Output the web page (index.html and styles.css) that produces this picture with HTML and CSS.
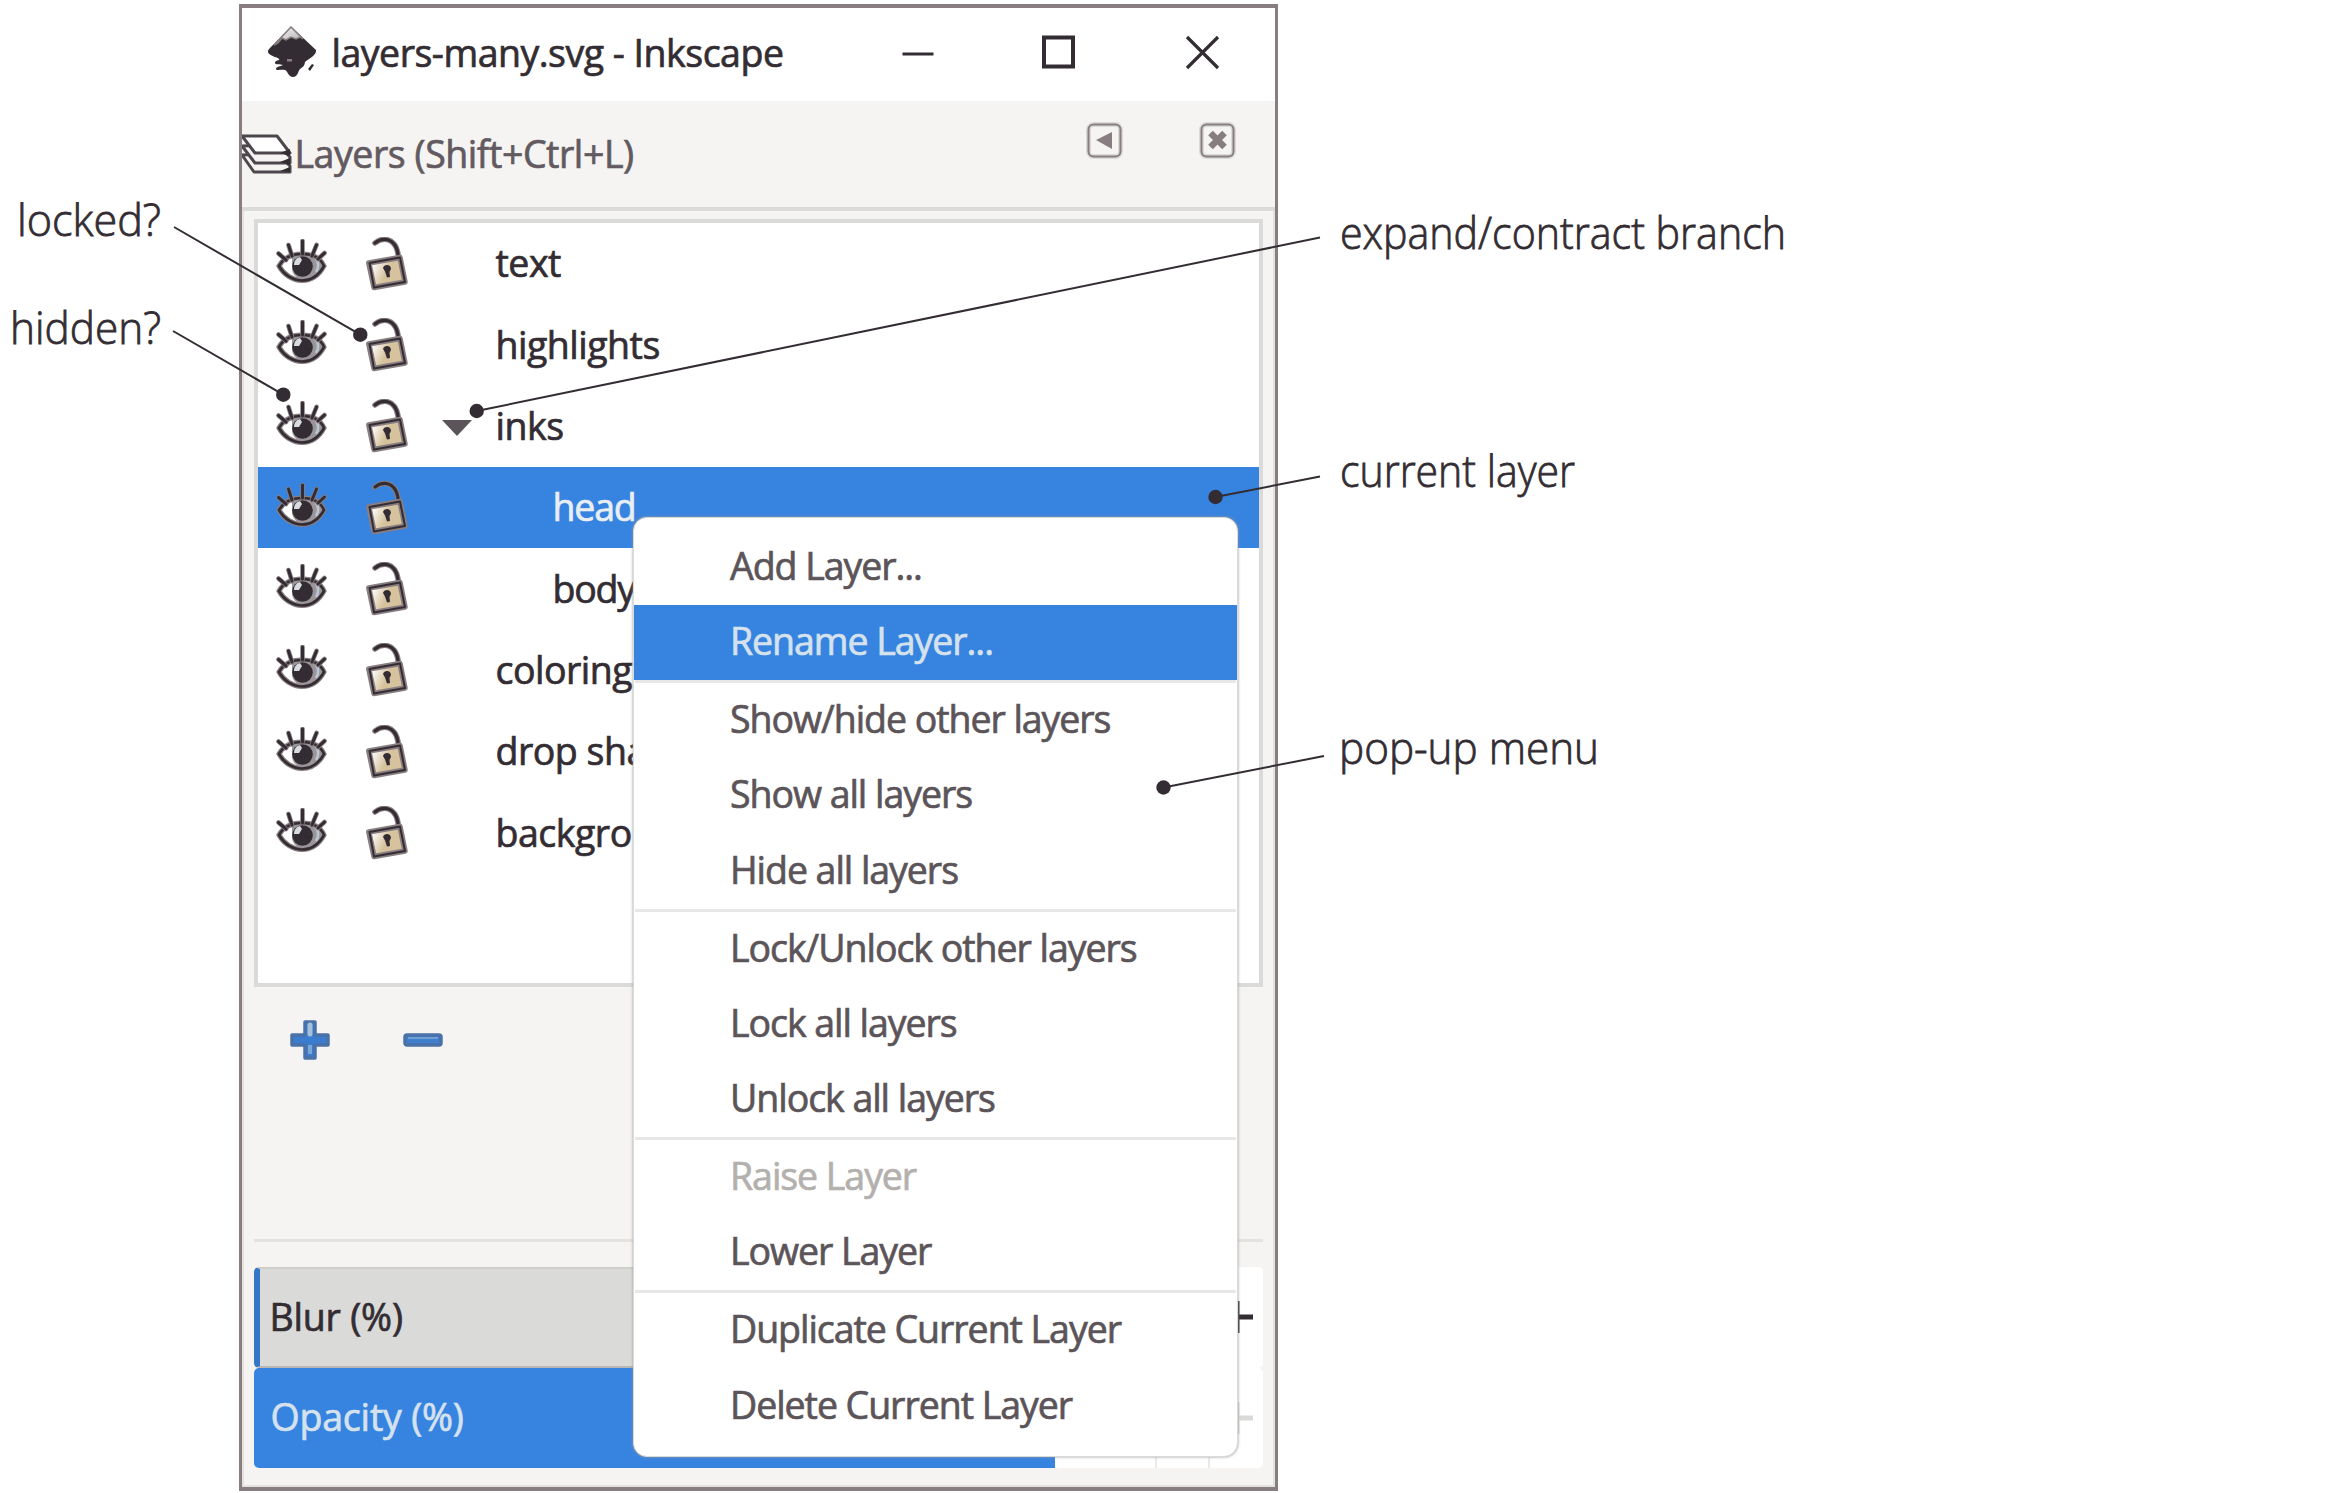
FILE: index.html
```html
<!DOCTYPE html>
<html lang="en">
<head>
<meta charset="utf-8">
<title>layers-many.svg - Inkscape</title>
<link rel="stylesheet" href="styles.css">
</head>
<body>
<svg class="defs" aria-hidden="true">
  <defs>
    <linearGradient id="brass" x1="0" x2="1" y2=".4"><stop offset=".15" stop-color="#fff"/><stop offset=".6" stop-color="#d6c29c"/></linearGradient>
    <linearGradient id="snow" x1="0" x2="1" y2="1"><stop offset="0" stop-color="#fff"/><stop offset="1" stop-color="#a9a6a8"/></linearGradient>
  </defs>
  <symbol id="eye" viewBox="0 0 51 45">
    <path d="M3 27C8 18 17 15 26 15s18 3 22 12c-5 9-13 14.500-22 14.500S8 36 3 27z" fill="#fff" stroke="#887d80" stroke-width="5"/>
    <path d="M16 17c9-2 24-2 31 10-4 8-11 12-19 13-6 0-11-3-12-10z" fill="#9b9499"/>
    <path d="M40 20c3 4 3 8 0 13" fill="none" stroke="#b9c6d4" stroke-width="2.500"/>
    <circle cx="26.500" cy="27.500" r="10.300" fill="#332d33"/>
    <path d="M18 26c0-4 2-7 6-8l2 3-3 5z" fill="#d8dce0"/>
    <path d="M3 27C8 18 17 15 26 15s18 3 22 12c-5 9-13 14.500-22 14.500S8 36 3 27z" fill="none" stroke="#332d33" stroke-width="2.600"/>
    <path d="M10 21L2.500 14.500M16 17L12.500 6M26.500 15V2M36 17L40.500 6M42 20L48.500 14" fill="none" stroke="#887d80" stroke-width="4.600" stroke-linecap="round"/>
    <path d="M10 21L2.500 14.500M16 17L12.500 6M26.500 15V2M36 17L40.500 6M42 20L48.500 14" fill="none" stroke="#332d33" stroke-width="3" stroke-linecap="round"/>
  </symbol>
  <symbol id="lock" viewBox="0 0 42 54">
    <path d="M9 6C15 1 23 1 28 7c4 4 4 10 5 17" fill="none" stroke="#887d80" stroke-width="5.500" stroke-linecap="round"/>
    <path d="M9 6C15 1 23 1 28 7c4 4 4 10 5 17" fill="none" stroke="#332d33" stroke-width="3.200" stroke-linecap="round"/>
    <path d="M2.800 26L34 20.500 39 45 8 50.500z" fill="url(#brass)" stroke="#887d80" stroke-width="5.500" stroke-linejoin="round"/>
    <path d="M3.500 26L34 20.500 39 45 8 50.500z" fill="none" stroke="#332d33" stroke-width="2" stroke-linejoin="round"/>
    <path d="M17 31c1-4 8-4 8 1l-1.500 3 .5 5-3 .5-2-6z" fill="#332d33"/>
  </symbol>
</svg>

<main class="window">
  <header class="titlebar">
    <svg class="logo" viewBox="0 0 50 53">
      <path d="M24 1.500L2 24c-3 4 1 6 6 8 3 1 5 2 4 3-3 1-4 1-4 3s5 1 8 2c-5 2-7 2-7 4s6 0 9 1 3 7 8 7 5-6 7-8c3-2 5-4 5-7 4-3 12-7 11-12z" fill="#332d33"/>
      <path d="M24 2L7 20l4-2 4-5 4 2 5-3 5 2 4-2 3 2z" fill="url(#snow)" stroke="#887d80" stroke-width="1.500"/>
      <path d="M41 44l4-5 2 1-4 6z" fill="#332d33"/>
      <path d="M20 34h5v2.500h-5z" fill="#887d80"/>
    </svg>
    <h1 class="title">layers-many.svg - Inkscape</h1>
    <svg class="controls" viewBox="0 0 320 36">
      <path d="M1.500 19h31" stroke="#332d33" stroke-width="3"/>
      <rect x="143" y="2.500" width="29" height="29" fill="none" stroke="#332d33" stroke-width="4"/>
      <path d="M286 2l31 31M317 2l-31 31" stroke="#332d33" stroke-width="3.200"/>
    </svg>
  </header>

  <section class="dock-head">
    <svg class="stack" viewBox="0 0 50 40">
      <g stroke="#4d464c" stroke-width="3" fill="#f5f4f2" stroke-linejoin="round">
        <path d="M0 21l12 17h36v-6L36 20z"/><path d="M0 12l13 17h35v-6L36 11z"/><path d="M0 2h35l13 17H13z" fill="#fff"/>
      </g>
      <path d="M38 19l10-4v7zM38 28l10-4v7zM38 37l10-4v5z" fill="#332d33"/>
    </svg>
    <h2 class="dock-title">Layers (Shift+Ctrl+L)</h2>
    <svg class="dock-buttons" viewBox="0 0 150 38">
      <g fill="none" stroke="#dadad8" stroke-width="5"><rect x="2.500" y="2.500" width="32" height="32" rx="5"/><rect x="115.500" y="2.500" width="32" height="32" rx="5"/></g>
      <g fill="none" stroke="#887d80" stroke-width="2"><rect x="2.500" y="2.500" width="32" height="32" rx="5"/><rect x="115.500" y="2.500" width="32" height="32" rx="5"/></g>
      <path d="M10 18l16-8v17z" fill="#887d80"/>
      <path d="M124.500 11l14 14M138.500 11l-14 14" stroke="#887d80" stroke-width="6.500"/>
    </svg>
  </section>

  <section class="panel">
    <ul class="layers">
      <li class="row"><svg class="eye"><use href="#eye"/></svg><svg class="lock"><use href="#lock"/></svg><span class="name">text</span></li>
      <li class="row"><svg class="eye"><use href="#eye"/></svg><svg class="lock"><use href="#lock"/></svg><span class="name">highlights</span></li>
      <li class="row"><svg class="eye"><use href="#eye"/></svg><svg class="lock"><use href="#lock"/></svg><span class="branch"></span><span class="name">inks</span></li>
      <li class="row current"><svg class="eye"><use href="#eye"/></svg><svg class="lock"><use href="#lock"/></svg><span class="name child">head</span></li>
      <li class="row"><svg class="eye"><use href="#eye"/></svg><svg class="lock"><use href="#lock"/></svg><span class="name child">body</span></li>
      <li class="row"><svg class="eye"><use href="#eye"/></svg><svg class="lock"><use href="#lock"/></svg><span class="name">coloring</span></li>
      <li class="row"><svg class="eye"><use href="#eye"/></svg><svg class="lock"><use href="#lock"/></svg><span class="name">drop shadow</span></li>
      <li class="row"><svg class="eye"><use href="#eye"/></svg><svg class="lock"><use href="#lock"/></svg><span class="name">background</span></li>
    </ul>

    <div class="tools">
      <svg class="tool" viewBox="0 0 40 40"><path d="M15 2h10v13h13v10H25v13H15V25H2V15h13z" fill="#3a7dcf" stroke="#4b72a8" stroke-width="3.500" stroke-linejoin="round"/><path d="M20 5v9" stroke="#a3c0dd" stroke-width="5" stroke-linecap="round"/><path d="M20 25v9" stroke="#7ba6d6" stroke-width="4"/></svg>
      <svg class="tool" viewBox="0 0 40 40"><rect x="2" y="15" width="36" height="10" rx="2" fill="#3f7fcc" stroke="#4b72a8" stroke-width="3.500"/><path d="M5 18h30" stroke="#6f9fd8" stroke-width="2"/></svg>
    </div>

    <div class="sliders">
      <div class="slider blur"><div class="track"><span class="slider-label">Blur (%)</span></div><div class="step"><svg class="plus" viewBox="0 0 32 32"><path d="M0 16h32M16 0v32" stroke="#332d33" stroke-width="5"/></svg></div></div>
      <div class="slider opacity"><div class="track"><span class="slider-label">Opacity (%)</span></div><div class="value"></div><div class="value mid"></div><div class="step"><svg class="plus" viewBox="0 0 32 32"><path d="M0 16h32M16 0v32" stroke="#dadad8" stroke-width="5"/></svg></div></div>
    </div>
  </section>
</main>

<nav class="menu">
  <ul class="group"><li>Add Layer...</li><li class="active">Rename Layer...</li></ul>
  <ul class="group"><li>Show/hide other layers</li><li>Show all layers</li><li>Hide all layers</li></ul>
  <ul class="group"><li>Lock/Unlock other layers</li><li>Lock all layers</li><li>Unlock all layers</li></ul>
  <ul class="group"><li class="disabled">Raise Layer</li><li>Lower Layer</li></ul>
  <ul class="group"><li>Duplicate Current Layer</li><li>Delete Current Layer</li></ul>
</nav>

<svg class="callouts" viewBox="0 0 2342 1493">
  <g stroke="#332d33" stroke-width="2">
    <path d="M174 227L360.300 334.700M173 331L283.300 394.700M1320 237.500L476.700 411M1320 476.500L1215.500 497M1324 756L1163.500 787.500"/>
  </g>
  <g fill="#332d33">
    <circle cx="360.300" cy="334.700" r="7.200"/><circle cx="283.300" cy="394.700" r="7.200"/><circle cx="476.700" cy="411" r="7.200"/><circle cx="1215.500" cy="497" r="7.200"/><circle cx="1163.500" cy="787.500" r="7.200"/>
  </g>
  <g class="callout-text">
    <text x="17" y="236" textLength="144" lengthAdjust="spacingAndGlyphs">locked?</text>
    <text x="10" y="344" textLength="151" lengthAdjust="spacingAndGlyphs">hidden?</text>
    <text x="1340" y="248.500" textLength="446" lengthAdjust="spacingAndGlyphs">expand/contract branch</text>
    <text x="1340" y="486.500" textLength="235" lengthAdjust="spacingAndGlyphs">current layer</text>
    <text x="1339" y="763.500" textLength="260" lengthAdjust="spacingAndGlyphs">pop-up menu</text>
  </g>
</svg>
</body>
</html>
```
FILE: styles.css
```css
* { box-sizing: border-box; }
body { margin: 0; padding-top: 4px; width: 2342px; height: 1493px; overflow: hidden; background: #fff; color: #332d33; font-family: "Open Sans", "Noto Sans", sans-serif; font-size: 37.5px; position: relative; -webkit-text-stroke: .7px currentColor; }
h1, h2, ul { margin: 0; padding: 0; font-size: inherit; font-weight: 400; list-style: none; }
svg { display: block; flex: none; }
.defs { position: absolute; width: 0; height: 0; }

.window { width: 1039px; height: 1487px; margin-left: 238.500px; border: 4px solid #887d80; border-width: 4px 3.500px; background: #f5f4f2; display: flex; flex-direction: column; }

.titlebar { height: 93px; flex: none; background: #fff; display: flex; align-items: center; padding: 0 54px 6px 25px; }
.logo { width: 50px; height: 53px; margin-top: -1px; }
.title { margin: 2px 0 0 15px; white-space: nowrap; letter-spacing: -.5px; }
.controls { width: 320px; height: 36px; margin-left: auto; margin-top: 3px; }

.dock-head { height: 110px; flex: none; border-bottom: 4px solid #dadad8; display: flex; align-items: center; padding-right: 39px; }
.stack { width: 50px; height: 40px; }
.dock-title { margin: -2px 0 0 3px; color: #625a60; white-space: nowrap; letter-spacing: -.45px; }
.dock-buttons { width: 150px; height: 38px; margin: -26px 0 0 auto; }

.panel { flex: 1; border: 2px solid #e3e2df; border-width: 0 2px 2px; padding: 8px 10px 0; display: flex; flex-direction: column; }
.layers { height: 768px; flex: none; border: 4px solid #dadad8; background: #fff; }
.row { height: 81.350px; display: flex; align-items: center; padding: 0 0 5px 18px; }
.row.current { background: #3784e0; color: #e9eef3; }
.eye { width: 51px; height: 45px; }
.lock { width: 42px; height: 54px; margin: 5px 0 0 39px; }
.name { margin-left: auto; margin-top: 3px; width: 763px; white-space: nowrap; letter-spacing: -.5px; }
.name.child { width: 706px; letter-spacing: -1.2px; }
.branch { margin: 8px 0 0 34px; border: 15px solid transparent; border-top: 16px solid #5b5459; border-bottom: 0; }

.tools { height: 255px; flex: none; display: flex; gap: 73px; padding: 33px 0 0 36px; border-bottom: 3px solid #e3e2df; }
.tool { width: 40px; height: 40px; }

.sliders { margin-top: 25px; display: flex; flex-direction: column; }
.slider { height: 100.500px; display: flex; background: #fff; border-radius: 5px; overflow: hidden; }
.track { display: flex; align-items: center; }
.slider-label { padding-bottom: 2px; letter-spacing: -.2px; }
.blur .track { width: 801px; background: #dadad8; border-left: 6px solid #3477c8; border-top: 2px solid #cfcecb; border-bottom: 2px solid #b9b6b4; padding-left: 10px; }
.opacity .track { width: 801px; background: #3784e0; color: #d5e2ee; padding-left: 17px; }
.value { width: 102px; border-right: 2px solid #ebeae8; }
.value.mid { width: 53px; }
.step { margin-left: auto; width: 52px; display: flex; align-items: center; padding-left: 10px; }
.plus { width: 32px; height: 32px; }

.menu { position: absolute; left: 633px; top: 517px; width: 605px; height: 940px; padding: 12px 1px; background: #fff; border: 1px solid #dadad8; border-radius: 14px; box-shadow: 0 0 3px #9a9799; color: #5b5459; letter-spacing: -1.05px; }
.group + .group { border-top: 3px solid #e8e7e5; }
.menu li { height: 75.150px; padding: 0 0 4px 95px; display: flex; align-items: center; white-space: nowrap; }
.menu .active { background: #3784e0; color: #d5e2ee; margin: 0 -1px; padding-left: 96px; }
.menu .disabled { color: #b3b0ae; }

.callouts { position: absolute; left: 0; top: 0; width: 2342px; height: 1493px; }
.callout-text { font-family: "Open Sans", "Noto Sans", sans-serif; font-weight: 300; font-size: 44px; fill: #332d33; stroke: #332d33; stroke-width: .8px; }
```
